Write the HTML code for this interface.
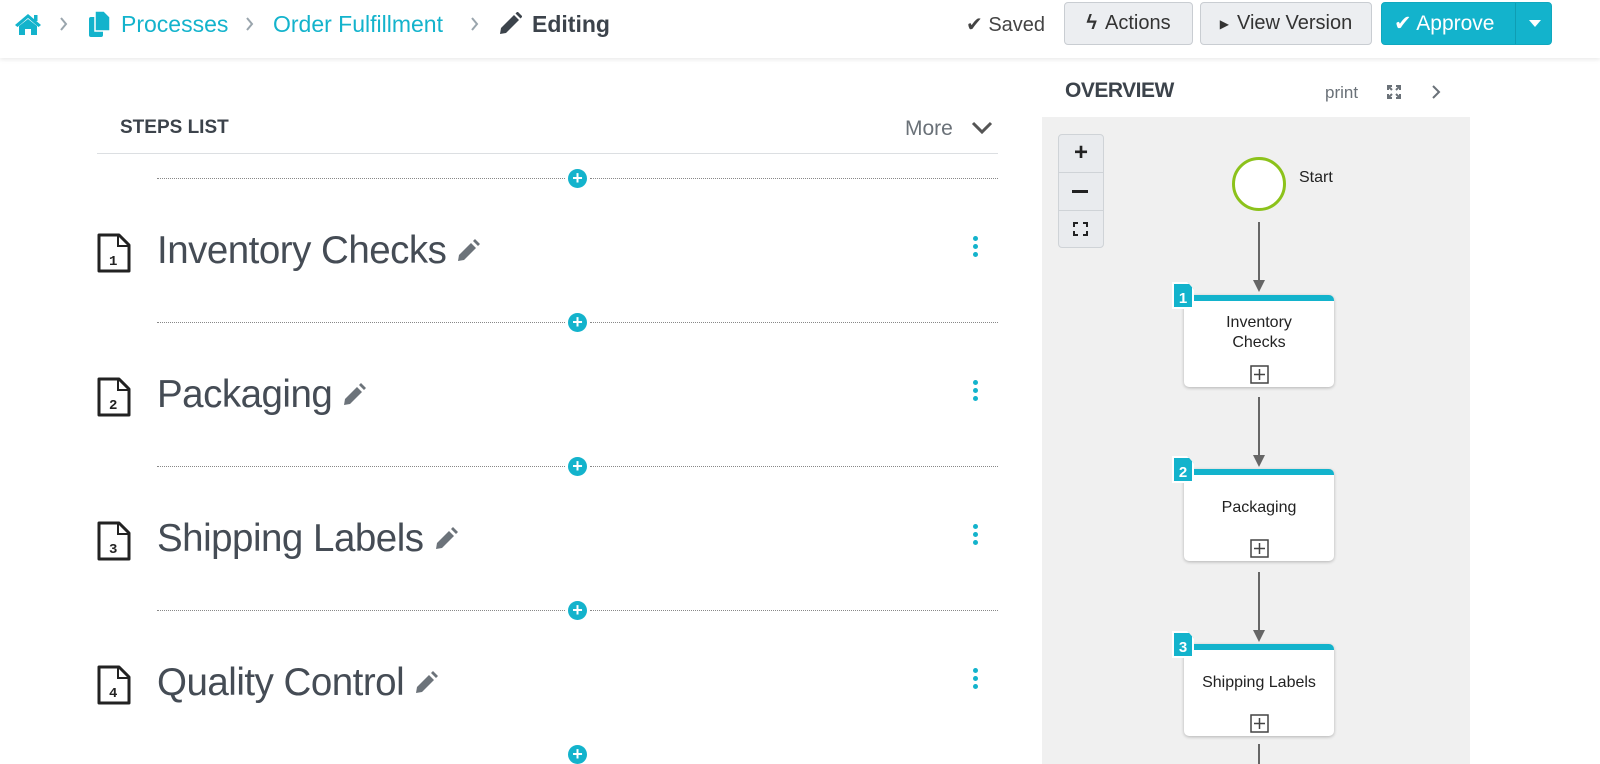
<!DOCTYPE html>
<html><head><meta charset="utf-8"><style>
*{margin:0;padding:0;box-sizing:border-box}
body{width:1600px;height:764px;overflow:hidden;background:#fff;font-family:"Liberation Sans",sans-serif;position:relative;color:#454c55}
.a{position:absolute}
.hdr{left:0;top:0;width:1600px;height:58px;background:#fff;box-shadow:0 2px 4px rgba(0,0,0,.08);z-index:2}
.bc{font-size:23px;color:#13b3cc;top:11px}
.chev{top:17px}
.btn{top:2px;height:43px;border:1px solid #c9cdd2;border-radius:4px;background:#eceef1;font-size:20px;color:#333;display:flex;align-items:center;justify-content:center;gap:8px}
.dot{height:0;border-top:1px dotted #888}
.plus{width:19px;height:19px;border-radius:50%;background:#13b3cc;color:#fff;font-weight:bold;font-size:18px;line-height:19px;text-align:center}
.title{font-size:38.5px;color:#454c55;left:157px;letter-spacing:-0.5px;display:flex;align-items:center;gap:10px;white-space:nowrap}
.keb{width:5px;height:5px;border-radius:50%;background:#13b3cc;left:973px}
.node{left:1184px;width:150px;height:92px;background:#fff;border-radius:5px;border-top:6px solid #13b3cc;box-shadow:0 1px 3px rgba(0,0,0,.25);font-size:16px;color:#222;text-align:center}
.badge{width:22px;height:27px;background:#13b3cc;color:#fff;font-weight:bold;font-size:15px;line-height:30px;text-align:center;border:2px solid #fff;clip-path:polygon(0 0,70% 0,100% 28%,100% 100%,0 100%)}
.pb{left:66px}
.arr{left:1258px;width:2px;background:#666}
</style></head><body>
<div class="a hdr">
<svg class="a" style="left:14px;top:12px" width="28" height="24" viewBox="0 0 28 24"><path d="M14 2 L1 13 L3.5 15 L14 6 L24.5 15 L27 13 Z" fill="#13b3cc"/><rect x="20" y="3" width="3.5" height="6" fill="#13b3cc"/><path d="M5 14 L14 7 L23 14 V23 H17 V17 H11 V23 H5Z" fill="#13b3cc"/></svg>
<svg class="a chev" style="left:60px" width="8" height="14" viewBox="0 0 8 14"><path d="M1 1 L6 7 L1 13" stroke="#9aa5ad" stroke-width="2" fill="none"/></svg>
<svg class="a" style="left:89px;top:11px" width="22" height="26" viewBox="0 0 22 26"><rect x="0" y="6" width="14" height="20" rx="2" fill="#13b3cc"/><path d="M6 0 H15 L21 6 V20 H6Z" fill="#13b3cc" stroke="#fff" stroke-width="1.5"/></svg>
<div class="a bc" style="left:121px">Processes</div>
<svg class="a chev" style="left:246px" width="8" height="14" viewBox="0 0 8 14"><path d="M1 1 L6 7 L1 13" stroke="#9aa5ad" stroke-width="2" fill="none"/></svg>
<div class="a bc" style="left:273px">Order Fulfillment</div>
<svg class="a chev" style="left:471px" width="8" height="14" viewBox="0 0 8 14"><path d="M1 1 L6 7 L1 13" stroke="#9aa5ad" stroke-width="2" fill="none"/></svg>
<svg class="a" style="left:498px;top:12px" width="24" height="24" viewBox="0 0 24 24"><path d="M2 22 L3 16 L16 3 L21 8 L8 21 Z" fill="#3c434b"/><path d="M17.5 1.5 L19.5 -0.5 L24.5 4.5 L22.5 6.5Z" fill="#3c434b"/></svg>
<div class="a" style="left:532px;top:11px;font-size:23px;font-weight:bold;color:#3c434b">Editing</div>
<div class="a" style="left:966px;top:12px;font-size:20px;color:#444">✔ Saved</div>
<div class="a btn" style="left:1064px;width:129px"><span style="font-size:20px;font-weight:bold">ϟ</span>Actions</div>
<div class="a btn" style="left:1200px;width:172px"><span style="font-size:12px">▶</span>View Version</div>
<div class="a btn" style="left:1381px;width:171px;background:#13b3cc;border-color:#10a8bf;color:#fff;justify-content:flex-start;padding-left:12px;font-size:21px">✔ Approve<div class="a" style="left:133px;top:0;width:1px;height:41px;background:#0e9db3"></div><div class="a" style="left:147px;top:17px;border:6px solid transparent;border-top:7px solid #fff"></div></div>
</div>

<div class="a" style="left:120px;top:117px;font-size:19px;font-weight:bold;color:#3c434b">STEPS LIST</div>
<div class="a" style="left:905px;top:117px;font-size:21px;color:#6a7178">More</div>
<svg class="a" style="left:971px;top:121px" width="22" height="14" viewBox="0 0 22 14"><path d="M2 2 L11 11 L20 2" stroke="#555" stroke-width="3" fill="none"/></svg>
<div class="a" style="left:97px;top:153px;width:901px;height:1px;background:#dcdfe2"></div>

<div class="a dot" style="left:157px;top:178px;width:408px"></div><div class="a plus" style="left:568px;top:169px">+</div><div class="a dot" style="left:590px;top:178px;width:408px"></div>
<div class="a dot" style="left:157px;top:322px;width:408px"></div><div class="a plus" style="left:568px;top:313px">+</div><div class="a dot" style="left:590px;top:322px;width:408px"></div>
<div class="a dot" style="left:157px;top:466px;width:408px"></div><div class="a plus" style="left:568px;top:457px">+</div><div class="a dot" style="left:590px;top:466px;width:408px"></div>
<div class="a dot" style="left:157px;top:610px;width:408px"></div><div class="a plus" style="left:568px;top:601px">+</div><div class="a dot" style="left:590px;top:610px;width:408px"></div>
<div class="a plus" style="left:568px;top:745px">+</div>

<svg class="a" style="left:97px;top:233px" width="34" height="40" viewBox="0 0 34 40"><path d="M2 2 H22 L32 12 V38 H2Z" fill="none" stroke="#222" stroke-width="3" stroke-linejoin="round"/><path d="M21 2 V13 H32" fill="none" stroke="#222" stroke-width="2"/><text x="12" y="32" font-size="14" font-weight="bold" fill="#222" font-family="Liberation Mono">1</text></svg>
<div class="a title" style="top:229px">Inventory Checks<svg width="24" height="24" viewBox="0 0 24 24"><path d="M2 22 L3 16 L15 4 L20 9 L8 21Z M17 2 L19 0 L24 5 L22 7Z" fill="#6c737a"/></svg></div>
<div class="a keb" style="top:236px"></div><div class="a keb" style="top:244px"></div><div class="a keb" style="top:252px"></div>

<svg class="a" style="left:97px;top:377px" width="34" height="40" viewBox="0 0 34 40"><path d="M2 2 H22 L32 12 V38 H2Z" fill="none" stroke="#222" stroke-width="3" stroke-linejoin="round"/><path d="M21 2 V13 H32" fill="none" stroke="#222" stroke-width="2"/><text x="12" y="32" font-size="14" font-weight="bold" fill="#222" font-family="Liberation Mono">2</text></svg>
<div class="a title" style="top:373px">Packaging<svg width="24" height="24" viewBox="0 0 24 24"><path d="M2 22 L3 16 L15 4 L20 9 L8 21Z M17 2 L19 0 L24 5 L22 7Z" fill="#6c737a"/></svg></div>
<div class="a keb" style="top:380px"></div><div class="a keb" style="top:388px"></div><div class="a keb" style="top:396px"></div>

<svg class="a" style="left:97px;top:521px" width="34" height="40" viewBox="0 0 34 40"><path d="M2 2 H22 L32 12 V38 H2Z" fill="none" stroke="#222" stroke-width="3" stroke-linejoin="round"/><path d="M21 2 V13 H32" fill="none" stroke="#222" stroke-width="2"/><text x="12" y="32" font-size="14" font-weight="bold" fill="#222" font-family="Liberation Mono">3</text></svg>
<div class="a title" style="top:517px">Shipping Labels<svg width="24" height="24" viewBox="0 0 24 24"><path d="M2 22 L3 16 L15 4 L20 9 L8 21Z M17 2 L19 0 L24 5 L22 7Z" fill="#6c737a"/></svg></div>
<div class="a keb" style="top:524px"></div><div class="a keb" style="top:532px"></div><div class="a keb" style="top:540px"></div>

<svg class="a" style="left:97px;top:665px" width="34" height="40" viewBox="0 0 34 40"><path d="M2 2 H22 L32 12 V38 H2Z" fill="none" stroke="#222" stroke-width="3" stroke-linejoin="round"/><path d="M21 2 V13 H32" fill="none" stroke="#222" stroke-width="2"/><text x="12" y="32" font-size="14" font-weight="bold" fill="#222" font-family="Liberation Mono">4</text></svg>
<div class="a title" style="top:661px">Quality Control<svg width="24" height="24" viewBox="0 0 24 24"><path d="M2 22 L3 16 L15 4 L20 9 L8 21Z M17 2 L19 0 L24 5 L22 7Z" fill="#6c737a"/></svg></div>
<div class="a keb" style="top:668px"></div><div class="a keb" style="top:676px"></div><div class="a keb" style="top:684px"></div>

<div class="a" style="left:1065px;top:79px;font-size:21px;font-weight:bold;color:#3c434b;letter-spacing:-0.5px">OVERVIEW</div>
<div class="a" style="left:1325px;top:83px;font-size:17px;color:#6a7178">print</div>
<svg class="a" style="left:1386px;top:84px" width="16" height="16" viewBox="0 0 16 16" stroke="#6a7178" stroke-width="2" fill="none"><path d="M2 2 L6 6 M14 2 L10 6 M2 14 L6 10 M14 14 L10 10 M2 6 V2 H6 M10 2 H14 V6 M2 10 V14 H6 M10 14 H14 V10"/></svg>
<svg class="a" style="left:1430px;top:84px" width="12" height="16" viewBox="0 0 12 16"><path d="M3 2 L9 8 L3 14" stroke="#6a7178" stroke-width="2" fill="none"/></svg>
<div class="a" style="left:1042px;top:117px;width:428px;height:647px;background:#f0f0f0"></div>
<div class="a" style="left:1058px;top:134px;width:46px;height:114px;border:1px solid #cfd3d7;border-radius:4px;background:#e9ebee"></div>
<div class="a" style="left:1059px;top:172px;width:44px;height:1px;background:#cfd3d7"></div>
<div class="a" style="left:1059px;top:210px;width:44px;height:1px;background:#cfd3d7"></div>
<div class="a" style="left:1058px;top:139px;width:46px;text-align:center;font-size:24px;font-weight:bold;color:#222">+</div>
<div class="a" style="left:1072px;top:190px;width:16px;height:3px;background:#222"></div>
<svg class="a" style="left:1073px;top:222px" width="15" height="14" viewBox="0 0 15 14" stroke="#222" stroke-width="2" fill="none"><path d="M1 5 V1 H5 M10 1 H14 V5 M1 9 V13 H5 M10 13 H14 V9"/></svg>

<div class="a" style="left:1232px;top:157px;width:54px;height:54px;border-radius:50%;border:3px solid #8cc21b;background:#fff"></div>
<div class="a" style="left:1299px;top:169px;font-size:16px;color:#222">Start</div>

<div class="a arr" style="top:222px;height:62px"></div><div class="a" style="left:1253px;top:280px;border:6px solid transparent;border-top:12px solid #666"></div>
<div class="a arr" style="top:397px;height:62px"></div><div class="a" style="left:1253px;top:455px;border:6px solid transparent;border-top:12px solid #666"></div>
<div class="a arr" style="top:572px;height:62px"></div><div class="a" style="left:1253px;top:630px;border:6px solid transparent;border-top:12px solid #666"></div>
<div class="a arr" style="top:744px;height:20px"></div>

<div class="a node" style="top:295px"><div style="padding-top:12px;line-height:20px">Inventory<br>Checks</div><svg class="a pb" style="top:64px" width="19" height="19" viewBox="0 0 19 19"><rect x="1" y="1" width="17" height="17" fill="none" stroke="#444" stroke-width="1.5"/><path d="M4 9.5 H15 M9.5 4 V15" stroke="#444" stroke-width="1.5"/></svg></div>
<div class="a badge" style="left:1172px;top:282px">1</div>
<div class="a node" style="top:469px"><div style="padding-top:23px;line-height:20px">Packaging</div><svg class="a pb" style="top:64px" width="19" height="19" viewBox="0 0 19 19"><rect x="1" y="1" width="17" height="17" fill="none" stroke="#444" stroke-width="1.5"/><path d="M4 9.5 H15 M9.5 4 V15" stroke="#444" stroke-width="1.5"/></svg></div>
<div class="a badge" style="left:1172px;top:456px">2</div>
<div class="a node" style="top:644px"><div style="padding-top:23px;line-height:20px">Shipping Labels</div><svg class="a pb" style="top:64px" width="19" height="19" viewBox="0 0 19 19"><rect x="1" y="1" width="17" height="17" fill="none" stroke="#444" stroke-width="1.5"/><path d="M4 9.5 H15 M9.5 4 V15" stroke="#444" stroke-width="1.5"/></svg></div>
<div class="a badge" style="left:1172px;top:631px">3</div>
</body></html>
